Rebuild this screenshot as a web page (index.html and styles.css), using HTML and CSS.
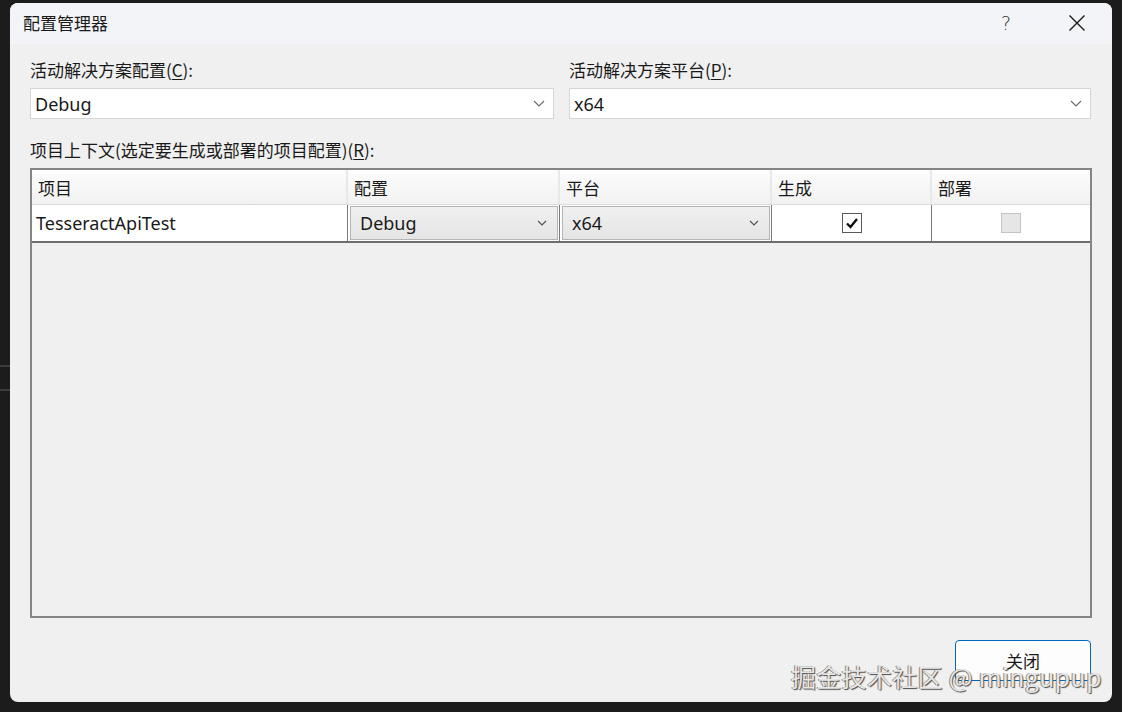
FILE: index.html
```html
<!DOCTYPE html>
<html>
<head>
    <title>配置管理器</title>
    <link rel="stylesheet" href="styles.css">
</head>
<body>
    <div class="dialog">
        <div class="titlebar">
            <span class="title">配置管理器</span>
            <span class="help">?</span>
            <span class="close">
                <svg width="18" height="18" viewBox="0 0 18 18"><path d="M1.5 1.5 L16.5 16.5 M16.5 1.5 L1.5 16.5" stroke="#1a1a1a" stroke-width="1.4" fill="none"/></svg>
            </span>
        </div>

        <div class="content">
            <div class="top-row">
                <div class="field">
                    <label class="field-label">活动解决方案配置(<u>C</u>):</label>
                    <div class="combo">
                        <span>Debug</span>
                        <svg class="chevron" width="12" height="7" viewBox="0 0 12 7"><path d="M1 1 L6 6 L11 1" stroke="#6b6b6b" stroke-width="1.1" fill="none"/></svg>
                    </div>
                </div>
                <div class="field">
                    <label class="field-label">活动解决方案平台(<u>P</u>):</label>
                    <div class="combo">
                        <span>x64</span>
                        <svg class="chevron" width="12" height="7" viewBox="0 0 12 7"><path d="M1 1 L6 6 L11 1" stroke="#6b6b6b" stroke-width="1.1" fill="none"/></svg>
                    </div>
                </div>
            </div>

            <label class="field-label grid-label">项目上下文(选定要生成或部署的项目配置)(<u>R</u>):</label>

            <div class="grid">
                <div class="grid-row header-row">
                    <div class="cell col-project">项目</div>
                    <div class="cell col-config">配置</div>
                    <div class="cell col-platform">平台</div>
                    <div class="cell col-build">生成</div>
                    <div class="cell col-deploy">部署</div>
                </div>
                <div class="grid-row data-row">
                    <div class="cell col-project">TesseractApiTest</div>
                    <div class="cell col-config">
                        <div class="cell-combo">
                            <span>Debug</span>
                            <svg width="10" height="6" viewBox="0 0 10 6"><path d="M1 1 L5 5 L9 1" stroke="#555" stroke-width="1.2" fill="none"/></svg>
                        </div>
                    </div>
                    <div class="cell col-platform">
                        <div class="cell-combo">
                            <span>x64</span>
                            <svg width="10" height="6" viewBox="0 0 10 6"><path d="M1 1 L5 5 L9 1" stroke="#555" stroke-width="1.2" fill="none"/></svg>
                        </div>
                    </div>
                    <div class="cell col-build center">
                        <span class="checkbox checked">
                            <svg width="14" height="14" viewBox="0 0 14 14"><path d="M2 7.5 L5.5 11 L12 3" stroke="#111" stroke-width="2.4" fill="none"/></svg>
                        </span>
                    </div>
                    <div class="cell col-deploy center">
                        <span class="checkbox disabled"></span>
                    </div>
                </div>
            </div>

            <div class="footer">
                <button class="btn-close">关闭</button>
            </div>
        </div>

        <div class="watermark">掘金技术社区 @ mingupup</div>
    </div>
</body>
</html>
```

FILE: styles.css
```css
body {
    margin: 0;
    width: 1122px;
    height: 712px;
    overflow: hidden;
    background-color: #1c1c1c;
    background-image:
        linear-gradient(to bottom, transparent 365px, #3c3c3c 365px, #3c3c3c 367px, transparent 367px),
        linear-gradient(to bottom, transparent 389px, #3c3c3c 389px, #3c3c3c 391px, transparent 391px);
    background-size: 10px 712px;
    background-repeat: no-repeat;
    font-family: "Noto Sans", "Noto Sans CJK SC", sans-serif;
    color: #1a1a1a;
}

.dialog {
    position: relative;
    margin: 3px 0 0 10px;
    width: 1102px;
    height: 699px;
    background-color: #f0f0f0;
    border-radius: 8px;
    overflow: hidden;
    display: flex;
    flex-direction: column;
}

.titlebar {
    height: 41px;
    flex-shrink: 0;
    background-color: #f2f4f8;
    display: flex;
    align-items: center;
    padding: 0 0 2px 13px;
    box-sizing: border-box;
}

.title {
    font-family: "Noto Sans CJK SC", sans-serif;
    font-size: 17px;
    line-height: 24px;
    flex: 1;
}

.help {
    font-family: "DejaVu Sans", sans-serif;
    font-weight: 300;
    font-size: 19px;
    width: 20px;
    text-align: center;
    margin-right: 52px;
    color: #333;
}

.close {
    display: flex;
    margin-right: 26px;
}

.content {
    flex: 1;
    padding: 14px 20px 0 20px;
    display: flex;
    flex-direction: column;
}

.top-row {
    display: grid;
    grid-template-columns: 524px 522px;
    column-gap: 15px;
}

.field-label {
    display: block;
    font-family: "Noto Sans CJK SC", sans-serif;
    font-size: 17px;
    line-height: 24px;
    margin-bottom: 6px;
}

.field-label u {
    text-underline-offset: 2px;
}

.combo {
    height: 31px;
    box-sizing: border-box;
    background-color: #fff;
    border: 1px solid #d6d6d6;
    display: flex;
    align-items: center;
    justify-content: space-between;
    padding: 0 8px 0 4px;
    font-size: 18px;
}

.grid-label {
    margin-top: 19px;
}

.grid {
    width: 1062px;
    height: 450px;
    box-sizing: border-box;
    border: 2px solid #858585;
    background-color: #f0f0f0;
}

.grid-row {
    display: flex;
}

.cell {
    box-sizing: border-box;
    display: flex;
    align-items: center;
    font-size: 18px;
}

.col-project { width: 316px; }
.col-config { width: 212px; }
.col-platform { width: 212px; }
.col-build { width: 160px; }
.col-deploy { width: 158px; }

.header-row {
    height: 34px;
    background: linear-gradient(to bottom, #fcfcfc, #f2f2f2);
    border-bottom: 1px solid #dcdcdc;
}

.header-row .cell {
    font-family: "Noto Sans CJK SC", sans-serif;
    font-size: 17px;
    padding-left: 6px;
    border-right: 2px solid #e8e8e8;
}

.header-row .cell:last-child {
    border-right: none;
}

.data-row {
    height: 36px;
    background-color: #fff;
    border-bottom: 2px solid #6e6e6e;
}

.data-row .cell {
    border-right: 1px solid #7a7a7a;
}

.data-row .cell:last-child {
    border-right: none;
}

.data-row .col-project {
    padding-left: 4px;
}

.data-row .col-config,
.data-row .col-platform {
    padding: 1px 1px 1px 2px;
}

.cell-combo {
    flex: 1;
    height: 100%;
    box-sizing: border-box;
    border: 1px solid #b4b4b4;
    background: linear-gradient(to bottom, #f0f0f0, #e5e5e5);
    display: flex;
    align-items: center;
    justify-content: space-between;
    padding: 0 10px 0 9px;
}

.center {
    justify-content: center;
}

.checkbox {
    width: 20px;
    height: 20px;
    box-sizing: border-box;
    display: flex;
    align-items: center;
    justify-content: center;
}

.checkbox.checked {
    border: 1px solid #5a5a5a;
    background-color: #fff;
}

.checkbox.disabled {
    border: 1px solid #c4c4c4;
    background-color: #e6e6e6;
}

.footer {
    display: flex;
    justify-content: flex-end;
    padding-top: 22px;
}

.btn-close {
    width: 136px;
    height: 41px;
    margin-right: 1px;
    background-color: #fdfdfd;
    border: 1px solid #0067c0;
    border-radius: 4px;
    font-family: "Noto Sans CJK SC", sans-serif;
    font-size: 17px;
    color: #1a1a1a;
    padding: 0;
}

.watermark {
    position: absolute;
    left: 781px;
    top: 654px;
    font-family: "Noto Sans CJK SC", sans-serif;
    font-size: 25px;
    line-height: 38px;
    letter-spacing: 0.3px;
    color: #e6e6e6;
    text-shadow: 1px 1px 1px #4a4a4a, -1px 0 0 #8a8a8a;
    white-space: nowrap;
}
```
